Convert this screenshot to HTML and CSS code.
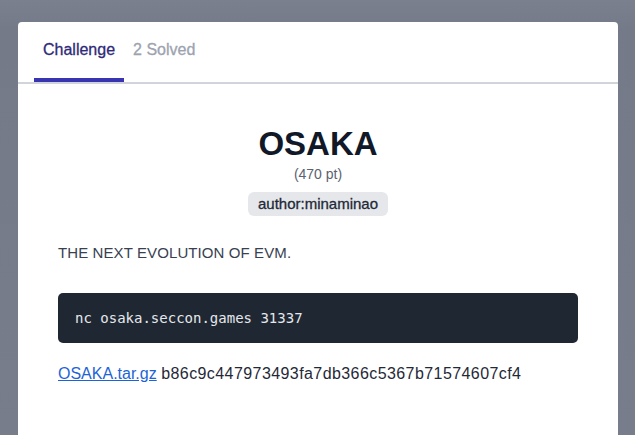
FILE: index.html
```html
<!DOCTYPE html>
<html lang="en">
<head>
<meta charset="utf-8">
<title>OSAKA</title>
<link rel="stylesheet" href="styles.css">
</head>
<body>
  <div class="backdrop">
    <div class="modal">
      <nav class="tabs">
        <a class="tab tab-active">Challenge</a>
        <a class="tab">2 Solved</a>
      </nav>
      <div class="modal-body">
        <h1 class="chal-name">OSAKA</h1>
        <div class="chal-value">(470 pt)</div>
        <div class="tags">
          <span class="tag">author:minaminao</span>
        </div>
        <p class="chal-desc">THE NEXT EVOLUTION OF EVM.</p>
        <pre class="code">nc osaka.seccon.games 31337</pre>
        <p class="file-line"><a class="file-link" href="#">OSAKA.tar.gz</a> <span class="file-hash">b86c9c447973493fa7db366c5367b71574607cf4</span></p>
      </div>
    </div>
  </div>
</body>
</html>
```
FILE: styles.css
```css
html, body {
  margin: 0;
  height: 100%;
  overflow: hidden;
}

body {
  background: #777d8a;
  font-family: "Liberation Sans", Arial, sans-serif;
  color: #1f2937;
}

.backdrop {
  padding: 22px 17px 0 18px;
  height: 100%;
  box-sizing: border-box;
  background: linear-gradient(180deg, #7a808e 0px, #747a88 30px, #777d8a 100%);
}

.modal {
  background: #ffffff;
  border-radius: 4px 4px 0 0;
  height: 100%;
}

/* tab strip */
.tabs {
  display: flex;
  padding-left: 16px;
  border-bottom: 2px solid #d1d5db;
}

.tab {
  padding: 16px 9px;
  font-size: 16px;
  line-height: 24px;
  color: #9ca3af;
  -webkit-text-stroke: 0.3px currentColor;
  border-bottom: 4px solid transparent;
  cursor: pointer;
}

.tab-active {
  color: #2e2a78;
  border-bottom-color: #3934b0;
}

/* challenge body */
.modal-body {
  padding: 0 40px;
}

.chal-name {
  margin: 40px 0 0;
  text-align: center;
  font-size: 33px;
  line-height: 40px;
  font-weight: 700;
  color: #111827;
}

.chal-value {
  text-align: center;
  font-size: 14px;
  line-height: 20px;
  color: #5b6270;
}

.tags {
  display: flex;
  justify-content: center;
  margin-top: 8px;
}

.tag {
  background: #e5e7eb;
  border-radius: 6px;
  padding: 2px 10px;
  font-size: 15px;
  line-height: 20px;
  color: #1f2937;
  -webkit-text-stroke: 0.3px currentColor;
}

.chal-desc {
  margin: 25px 0 0;
  font-size: 15px;
  letter-spacing: 0.1px;
  line-height: 24px;
  color: #374151;
}

.code {
  margin: 28px 0 0;
  background: #1f2733;
  color: #e5e7eb;
  border-radius: 5px;
  padding: 15px 17px;
  font-family: "DejaVu Sans Mono", monospace;
  font-size: 14px;
  line-height: 20px;
}

.file-line {
  margin: 19px 0 0;
  font-size: 16px;
  line-height: 24px;
  color: #1f2937;
}

.file-link {
  color: #1d63d6;
  text-decoration: underline;
}

.file-hash {
  letter-spacing: 0.42px;
}
```
